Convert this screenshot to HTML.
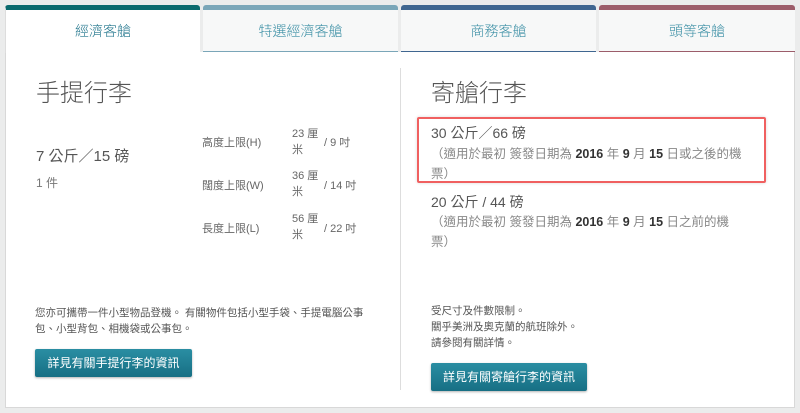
<!DOCTYPE html>
<html><head><meta charset="utf-8"><style>
*{margin:0;padding:0;box-sizing:border-box}
body{width:800px;height:413px;background:#ebecec;font-family:"Liberation Sans","Noto Sans CJK TC",sans-serif;position:relative;overflow:hidden;color:#555}
.tab{position:absolute;top:5px;height:47px;background:#f7f8f8;border-top:5px solid;text-align:center;font-size:14px;color:#3a8ea4;line-height:42px;border-radius:3px 3px 0 0;border-bottom:1px solid #ddd;font-weight:300}
.panel{position:absolute;left:5px;top:52px;width:790px;height:356px;background:#fff;border:1px solid #d8d8d8;border-top:none}
.a{position:absolute;white-space:nowrap}
.btn{position:absolute;height:28px;background:linear-gradient(#2a8ea3,#176f84);color:#fff;font-size:12px;line-height:28px;text-align:center;border-radius:2px;box-shadow:0 1px 2px rgba(0,0,0,.3)}
.s{font-size:11px;color:#666}
b{color:#333}
h2{font-weight:300;color:#555}
</style></head><body>
<div class="tab" style="left:5px;width:195px;border-color:#0b6a6e;background:#fff;border-bottom:none;height:48px;z-index:2;color:#21758c;border-left:1px solid #ddd">經濟客艙</div>
<div class="tab" style="left:203px;width:195px;border-color:#7aa6b8">特選經濟客艙</div>
<div class="tab" style="left:401px;width:195px;border-color:#3f6690">商務客艙</div>
<div class="tab" style="left:599px;width:196px;border-color:#9c5d6a">頭等客艙</div>
<div class="panel"></div>
<div class="a" style="left:400px;top:68px;width:1px;height:322px;background:#ddd"></div>
<h2 class="a" style="left:36px;top:73px;font-size:24px">手提行李</h2>
<div class="a" style="left:36px;top:145px;font-size:15px;color:#555">7 公斤／15 磅</div>
<div class="a" style="left:36px;top:174px;font-size:12px;color:#777">1 件</div>
<div class="a s" style="left:202px;top:134px">高度上限(H)</div>
<div class="a s" style="left:202px;top:177px">闊度上限(W)</div>
<div class="a s" style="left:202px;top:220px">長度上限(L)</div>
<div class="a s" style="left:292px;top:126px;line-height:16px">23 厘<br>米</div>
<div class="a s" style="left:292px;top:168px;line-height:16px">36 厘<br>米</div>
<div class="a s" style="left:292px;top:211px;line-height:16px">56 厘<br>米</div>
<div class="a s" style="left:324px;top:134px">/ 9 吋</div>
<div class="a s" style="left:324px;top:177px">/ 14 吋</div>
<div class="a s" style="left:324px;top:220px">/ 22 吋</div>
<h2 class="a" style="left:431px;top:73px;font-size:24px">寄艙行李</h2>
<div class="a" style="left:417px;top:117px;width:349px;height:66px;border:2px solid #f06060;border-radius:2px;box-shadow:0 0 3px rgba(0,0,0,.15)"></div>
<div class="a" style="left:431px;top:123px;font-size:14px;color:#555">30 公斤／66 磅</div>
<div class="a" style="left:431px;top:144px;font-size:12.5px;color:#888;line-height:20px;white-space:normal;width:325px">（適用於最初 簽發日期為 <b>2016</b> 年 <b>9</b> 月 <b>15</b> 日或之後的機票）</div>
<div class="a" style="left:431px;top:192px;font-size:14px;color:#555">20 公斤 / 44 磅</div>
<div class="a" style="left:431px;top:212px;font-size:12.5px;color:#888;line-height:20px;white-space:normal;width:312px">（適用於最初 簽發日期為 <b>2016</b> 年 <b>9</b> 月 <b>15</b> 日之前的機票）</div>
<div class="a" style="left:35px;top:305px;font-size:10.5px;color:#555;line-height:16px">您亦可攜帶一件小型物品登機。 有關物件包括小型手袋、手提電腦公事<br>包、小型背包、相機袋或公事包。</div>
<div class="a" style="left:431px;top:303px;font-size:10.5px;color:#555;line-height:16px">受尺寸及件數限制。<br>關乎美洲及奧克蘭的航班除外。<br>請參閱有關詳情。</div>
<div class="btn" style="left:35px;top:349px;width:157px">詳見有關手提行李的資訊</div>
<div class="btn" style="left:431px;top:363px;width:156px">詳見有關寄艙行李的資訊</div>
</body></html>
